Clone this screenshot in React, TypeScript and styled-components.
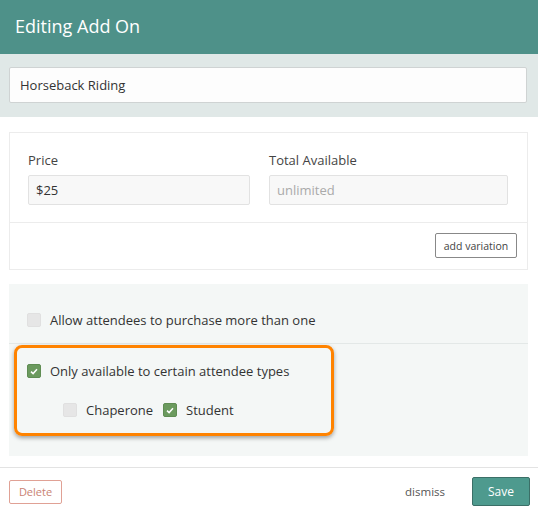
import React from "react";
import styled, { createGlobalStyle } from "styled-components";

const Global = createGlobalStyle`
  html, body { margin: 0; padding: 0; background: #ffffff; }
  body { font-family: "Open Sans", "DejaVu Sans", sans-serif; color: #333; }
  * { box-sizing: border-box; }
`;

const Page = styled.div`
  width: 538px;
  height: 516px;
  display: flex;
  flex-direction: column;
  background: #fff;
`;

const Header = styled.div`
  height: 54px;
  flex-shrink: 0;
  background: #4e9189;
  display: flex;
  align-items: center;
  padding: 0 15px 2px;
  color: #fff;
  font-size: 18px;
`;

const NameBand = styled.div`
  background: #e0e8e7;
  padding: 13px 11px 14px 9px;
`;

const NameInput = styled.div`
  height: 36px;
  background: #fdfdfd;
  border: 1px solid #cfd3d3;
  border-radius: 2px;
  display: flex;
  align-items: center;
  padding: 0 10px;
  font-size: 13px;
  color: #333;
`;

const Body = styled.div`
  padding: 15px 10px 0 9px;
  display: flex;
  flex-direction: column;
  gap: 14px;
`;

const Card = styled.div`
  border: 1px solid #ececec;
  display: flex;
  flex-direction: column;
`;

const Fields = styled.div`
  display: grid;
  grid-template-columns: 222px 239px;
  column-gap: 19px;
  padding: 18px 18px 17px;
  border-bottom: 1px solid #ececec;
`;

const Field = styled.div`
  display: flex;
  flex-direction: column;
  gap: 6px;
`;

const Label = styled.div`
  font-size: 13px;
  color: #444;
  line-height: 18px;
`;

const TextBox = styled.div<{ $placeholder?: boolean }>`
  height: 30px;
  background: #f8f8f8;
  border: 1px solid #e2e2e2;
  border-radius: 2px;
  display: flex;
  align-items: center;
  padding: 0 7px;
  font-size: 13px;
  color: ${(p) => (p.$placeholder ? "#aaa" : "#333")};
`;

const CardFooter = styled.div`
  display: flex;
  justify-content: flex-end;
  padding: 10px 10px 11px;
`;

const SmallButton = styled.button`
  height: 25px;
  width: 82px;
  background: #fff;
  border: 1px solid #888;
  border-radius: 2px;
  font-family: inherit;
  font-size: 10.5px;
  color: #444;
  padding: 0;
`;

const Options = styled.div`
  background: #f4f7f6;
  display: flex;
  flex-direction: column;
  height: 172px;
`;

const OptionRow = styled.div`
  height: 60px;
  padding: 12px 0 0 18px;
  display: flex;
  align-items: center;
  border-bottom: 1px solid #e3e8e7;
`;

const Highlight = styled.div`
  margin: 1px 0 0 5px;
  width: 320px;
  height: 91px;
  border: 3px solid #ff8300;
  border-radius: 8px;
  box-shadow: 0 2px 4px rgba(0, 0, 0, 0.35);
  display: flex;
  flex-direction: column;
  padding: 14px 0 0 10px;
  gap: 21px;
`;

const Check = styled.label`
  display: flex;
  align-items: center;
  gap: 9px;
  font-size: 13px;
  color: #333;
`;

const Box = styled.span<{ $on?: boolean }>`
  width: 14px;
  height: 14px;
  flex-shrink: 0;
  border-radius: 2px;
  background: ${(p) => (p.$on ? "#6b9a5e" : "#e6e6e6")};
  border: 1px solid ${(p) => (p.$on ? "#5f8d53" : "#e0e0e0")};
  display: flex;
  align-items: center;
  justify-content: center;
`;

const SubRow = styled.div`
  display: flex;
  gap: 10px;
  padding-left: 36px;
`;

const Footer = styled.div`
  margin-top: 11px;
  border-top: 1px solid #e3e3e3;
  display: flex;
  align-items: center;
  padding: 9px 8px 0 9px;
`;

const DeleteButton = styled.button`
  width: 53px;
  height: 24px;
  background: #fff;
  border: 1px solid #e0a195;
  border-radius: 2px;
  color: #c98273;
  font-family: inherit;
  font-size: 11px;
  padding: 0;
`;

const Spacer = styled.div`
  flex: 1;
`;

const Dismiss = styled.span`
  font-size: 11.5px;
  color: #555;
  margin-right: 27px;
`;

const SaveButton = styled.button`
  width: 58px;
  height: 29px;
  background: #4e9a8e;
  border: 1px solid #3b6f67;
  border-radius: 2px;
  color: #fff;
  font-family: inherit;
  font-size: 12px;
  padding: 0;
`;

const Tick = () => (
  <svg width="8" height="7" viewBox="0 0 8 7">
    <path d="M1 3.6 L3.1 5.6 L7 1.3" fill="none" stroke="#fff" strokeWidth="1.5" />
  </svg>
);

const CheckItem = ({ on, children }: { on?: boolean; children: React.ReactNode }) => (
  <Check>
    <Box $on={on}>{on && <Tick />}</Box>
    {children}
  </Check>
);

export default function App() {
  return (
    <Page>
      <Global />
      <Header>Editing Add On</Header>
      <NameBand>
        <NameInput>Horseback Riding</NameInput>
      </NameBand>
      <Body>
        <Card>
          <Fields>
            <Field>
              <Label>Price</Label>
              <TextBox>$25</TextBox>
            </Field>
            <Field>
              <Label>Total Available</Label>
              <TextBox $placeholder>unlimited</TextBox>
            </Field>
          </Fields>
          <CardFooter>
            <SmallButton>add variation</SmallButton>
          </CardFooter>
        </Card>
        <Options>
          <OptionRow>
            <CheckItem>Allow attendees to purchase more than one</CheckItem>
          </OptionRow>
          <Highlight>
            <CheckItem on>Only available to certain attendee types</CheckItem>
            <SubRow>
              <CheckItem>Chaperone</CheckItem>
              <CheckItem on>Student</CheckItem>
            </SubRow>
          </Highlight>
        </Options>
      </Body>
      <Footer>
        <DeleteButton>Delete</DeleteButton>
        <Spacer />
        <Dismiss>dismiss</Dismiss>
        <SaveButton>Save</SaveButton>
      </Footer>
    </Page>
  );
}
